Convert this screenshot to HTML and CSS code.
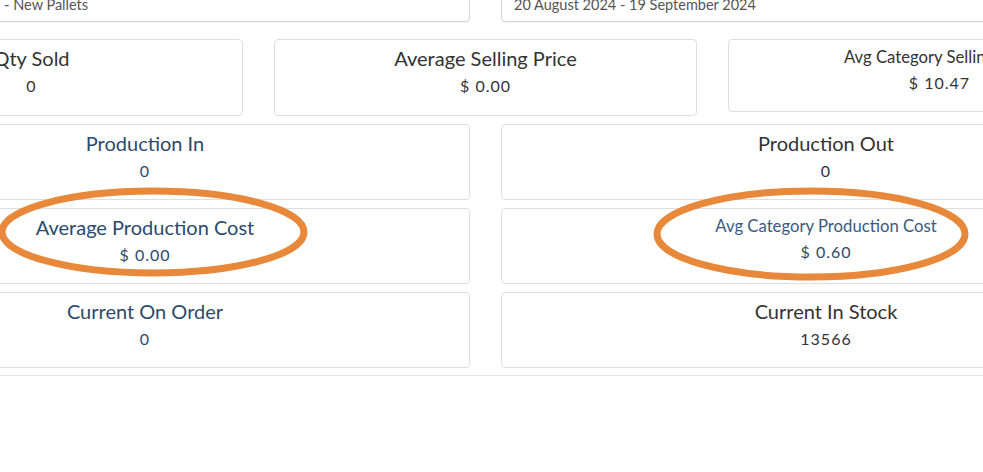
FILE: index.html
```html
<!DOCTYPE html>
<html lang="en">
<head>
    <meta charset="UTF-8">
    <meta name="viewport" content="width=device-width, initial-scale=1.0">
    <title>Product Summary</title>
    <link rel="stylesheet" href="styles.css">
</head>
<body>
    <div class="panel">
        <div class="filters">
            <div class="filter filter-category">Refurbished - New Pallets</div>
            <div class="filter">20 August 2024 - 19 September 2024</div>
        </div>

        <div class="row row-3">
            <div class="card">
                <h4 class="card-title">Qty Sold</h4>
                <div class="card-value">0</div>
            </div>
            <div class="card">
                <h4 class="card-title">Average Selling Price</h4>
                <div class="card-value">$ 0.00</div>
            </div>
            <div class="card card-small">
                <h4 class="card-title">Avg Category Selling Price</h4>
                <div class="card-value">$ 10.47</div>
            </div>
        </div>

        <div class="row row-2">
            <div class="card card-blue">
                <h4 class="card-title">Production In</h4>
                <div class="card-value">0</div>
            </div>
            <div class="card">
                <h4 class="card-title">Production Out</h4>
                <div class="card-value">0</div>
            </div>
        </div>

        <div class="row row-2">
            <div class="card card-blue">
                <h4 class="card-title">Average Production Cost</h4>
                <div class="card-value">$ 0.00</div>
            </div>
            <div class="card card-blue card-small">
                <h4 class="card-title">Avg Category Production Cost</h4>
                <div class="card-value">$ 0.60</div>
            </div>
        </div>

        <div class="row row-2">
            <div class="card card-blue">
                <h4 class="card-title">Current On Order</h4>
                <div class="card-value">0</div>
            </div>
            <div class="card">
                <h4 class="card-title">Current In Stock</h4>
                <div class="card-value">13566</div>
            </div>
        </div>
    </div>

    <!-- highlight marks drawn over the screenshot -->
    <svg class="marks" width="983" height="472" viewBox="0 0 983 472">
        <ellipse cx="153" cy="232" rx="151" ry="41" fill="none" stroke="#e8883a" stroke-width="7"/>
        <ellipse cx="811" cy="234" rx="154" ry="43" fill="none" stroke="#e8883a" stroke-width="7"/>
    </svg>
</body>
</html>
```

FILE: styles.css
```css
body {
    margin: 0;
    font-family: Lato, "Open Sans", sans-serif;
    background: #fff;
    color: #333;
    overflow: hidden;
    position: relative;
    height: 472px;
}
.panel {
    width: 1331px;
    margin-left: -180px;
    padding-bottom: 7px;
    border-bottom: 1px solid #e6e6e6;
    display: flex;
    flex-direction: column;
    gap: 8px;
}
.filters {
    display: grid;
    grid-template-columns: 1fr 1fr;
    gap: 31px;
    margin-top: -12px;
    margin-bottom: 9px;
}
.filter {
    height: 32px;
    line-height: 32px;
    padding: 0 12px;
    border: 1px solid #d6d6d6;
    border-radius: 4px;
    font-size: 14.5px;
    color: #555;
    box-shadow: 0 1px 1px rgba(0, 0, 0, 0.05);
}
.filter-category {
    padding-left: 103px;
}
.row {
    display: grid;
    gap: 31px;
}
.row-3 {
    grid-template-columns: 1fr 1fr 1fr;
    align-items: start;
}
.row-2 {
    grid-template-columns: 1fr 1fr;
}
.card {
    border: 1px solid #dedede;
    border-radius: 4px;
    text-align: center;
    padding: 4px 10px 0;
    height: 76px;
    box-sizing: border-box;
}
.row-3 .card {
    height: 77px;
}
.row-3 .card-small {
    height: 73px;
}
.card-title {
    margin: 0;
    font-size: 20px;
    font-weight: normal;
    line-height: 28px;
}
.card-value {
    margin-top: 3px;
    font-size: 16px;
    letter-spacing: 1px;
    line-height: 22px;
}
.card-small .card-title {
    font-size: 16.7px;
    line-height: 26px;
}
.card-small .card-value {
    margin-top: 2px;
}
.card-blue {
    color: #2c4a6c;
}
.card-blue.card-small .card-title {
    color: #3a5a80;
}
.marks {
    position: absolute;
    top: 0;
    left: 0;
    pointer-events: none;
}
```
